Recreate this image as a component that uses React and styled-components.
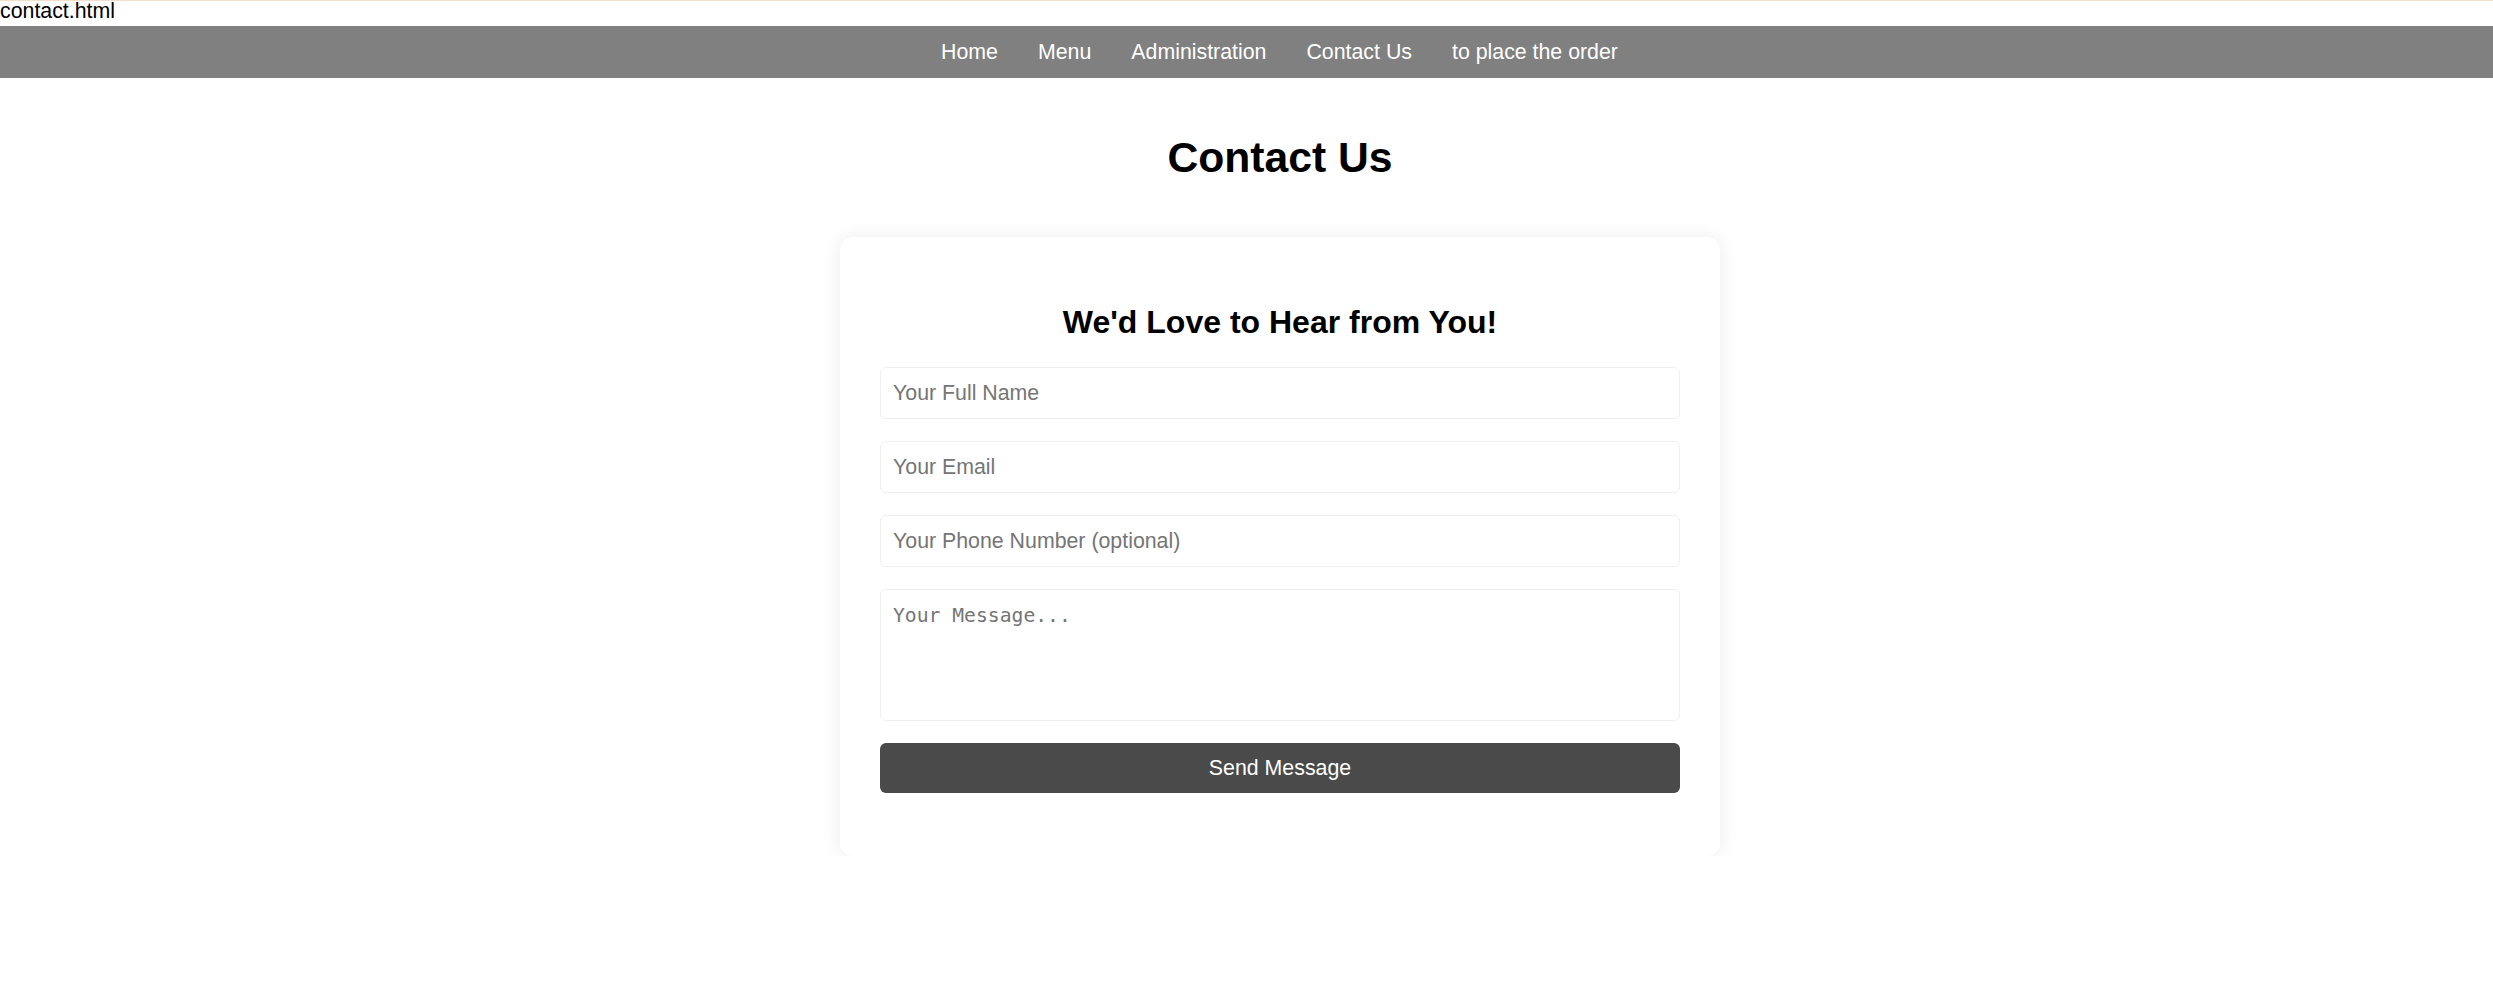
import styled, { createGlobalStyle } from 'styled-components'

const GlobalStyle = createGlobalStyle`
  html, body {
    margin: 0;
    padding: 0;
    background: #fff;
  }
  body {
    font-family: "Liberation Sans", Arial, sans-serif;
    color: #000;
  }
`

const FileLabel = styled.div`
  border-top: 1px solid #f3dfcc;
  font-size: 21.33px;
  line-height: 21px;
  padding-bottom: 4px;
`

const NavBar = styled.nav`
  background: #808080;
  height: 52px;
  box-sizing: border-box;
  padding: 13.5px 0 14.5px;
`

const NavList = styled.ul`
  list-style: none;
  margin: 0;
  padding: 0 0 0 66px;
  display: flex;
  justify-content: center;
  gap: 40px;
`

const NavLink = styled.a`
  color: #fff;
  text-decoration: none;
  font-size: 21.33px;
  line-height: 24px;
  display: block;
`

const Main = styled.main`
  padding-left: 67px;
  display: flex;
  flex-direction: column;
  align-items: center;
`

const PageTitle = styled.h1`
  font-size: 42.67px;
  font-weight: 700;
  line-height: 49px;
  margin: 54.7px 0 55.3px;
`

const Card = styled.section`
  width: 880px;
  box-sizing: border-box;
  padding: 40px 40px 63px;
  background: #fff;
  border-radius: 13px;
  box-shadow: 0 0 20px rgba(0, 0, 0, 0.08);
`

const CardTitle = styled.h2`
  font-size: 32px;
  font-weight: 700;
  line-height: 37px;
  text-align: center;
  margin: 26.67px 0 26.6px;
`

const Form = styled.form`
  display: flex;
  flex-direction: column;
  gap: 22px;
`

const Field = styled.input`
  height: 52px;
  box-sizing: border-box;
  padding: 0 12px;
  border: 1px solid #efefef;
  border-radius: 6px;
  font-family: "Liberation Sans", Arial, sans-serif;
  font-size: 21.33px;
  color: #000;
  outline: none;

  &::placeholder {
    color: #757575;
  }
`

const MessageBox = styled.textarea`
  display: block;
  height: 132px;
  box-sizing: border-box;
  padding: 14px 12px 12px;
  border: 1px solid #efefef;
  border-radius: 6px;
  font-family: "DejaVu Sans Mono", "Liberation Mono", monospace;
  font-size: 19.7px;
  resize: none;
  outline: none;

  &::placeholder {
    color: #757575;
  }
`

const SendButton = styled.button`
  height: 50px;
  border: none;
  border-radius: 6px;
  background: #4a4a4a;
  color: #fff;
  font-family: "Liberation Sans", Arial, sans-serif;
  font-size: 21.33px;
  cursor: pointer;
`

const links = ['Home', 'Menu', 'Administration', 'Contact Us', 'to place the order']

const App = () => {
  return (
    <>
      <GlobalStyle />
      <FileLabel>contact.html</FileLabel>
      <NavBar>
        <NavList>
          {links.map(l => (
            <li key={l}>
              <NavLink href="#">{l}</NavLink>
            </li>
          ))}
        </NavList>
      </NavBar>
      <Main>
        <PageTitle>Contact Us</PageTitle>
        <Card>
          <CardTitle>We'd Love to Hear from You!</CardTitle>
          <Form onSubmit={e => e.preventDefault()}>
            <Field type="text" placeholder="Your Full Name" />
            <Field type="email" placeholder="Your Email" />
            <Field type="tel" placeholder="Your Phone Number (optional)" />
            <MessageBox placeholder="Your Message..." />
            <SendButton type="submit">Send Message</SendButton>
          </Form>
        </Card>
      </Main>
    </>
  )
}

export default App
